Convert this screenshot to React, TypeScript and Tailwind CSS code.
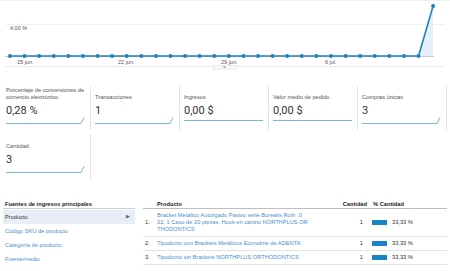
import React from "react";

// Datos del gráfico: 30 días, todo a cero salvo el último
const points = Array.from({ length: 30 }, (_, i) => ({
  x: 10 + i * 14.59,
  y: i === 29 ? 6 : 56,
}));

function Chart() {
  const line = points.map((p) => `${p.x},${p.y}`).join(" ");
  const last = points[29];
  const prev = points[28];
  return (
    <svg width="450" height="72" className="block" style={{ fontFamily: "'Liberation Sans', Arial, sans-serif" }}>
      <line x1="0" y1="0.5" x2="450" y2="0.5" stroke="#f0f0f0" />
      <line x1="5" y1="24.5" x2="445" y2="24.5" stroke="#f0f0f0" />
      <text x="10" y="30" fontSize="5.5" fill="#555">4,00 %</text>
      <polygon points={`${prev.x},${prev.y} ${last.x},${last.y} ${last.x},56`} fill="#e3f0f9" />
      <line x1="5" y1="56.5" x2="434" y2="56.5" stroke="#c8c8c8" />
      <polyline points={line} fill="none" stroke="#1f82c0" strokeWidth="1.6" strokeLinejoin="round" />
      {points.map((p, i) => (
        <circle key={i} cx={p.x} cy={p.y} r="2" fill="#1f82c0" />
      ))}
      <text x="17" y="64" fontSize="5.5" fill="#555">15 jun.</text>
      <text x="118" y="64" fontSize="5.5" fill="#555">22 jun.</text>
      <text x="221" y="64" fontSize="5.5" fill="#555">29 jun.</text>
      <text x="325" y="64" fontSize="5.5" fill="#555">6 jul.</text>
      <line x1="5" y1="66.5" x2="444" y2="66.5" stroke="#e6eef3" />
      <rect x="213.5" y="65.5" width="23" height="3.5" fill="#fafafa" stroke="#dcdcdc" strokeWidth="0.6" />
      <path d="M223 66.5 L226 66.5 L224.5 68 Z" fill="#777" />
    </svg>
  );
}

function Sparkline({ flat }: { flat?: boolean }) {
  return (
    <svg width="80" height="9" className="block">
      {flat ? (
        <line x1="0" y1="3.5" x2="79" y2="3.5" stroke="#6aafd3" strokeWidth="0.9" />
      ) : (
        <polyline points="0,6.5 75,6.5 78,0.5" fill="none" stroke="#6aafd3" strokeWidth="0.9" />
      )}
    </svg>
  );
}

interface Metric {
  title: string;
  value: string;
  flat?: boolean;
}

const metrics: Metric[] = [
  { title: "Porcentaje de conversiones de comercio electrónico", value: "0,28 %" },
  { title: "Transacciones", value: "1" },
  { title: "Ingresos", value: "0,00 $", flat: true },
  { title: "Valor medio de pedido", value: "0,00 $", flat: true },
  { title: "Compras únicas", value: "3" },
  { title: "Cantidad", value: "3" },
];

function MetricCard({ title, value, flat }: Metric) {
  return (
    <div className="w-[89px] pl-[4px] pr-[4px] border-r border-[#e4e4e4] pb-[4px]">
      <div className="h-[15px] flex items-end text-[5.7px] leading-[7px] text-[#555]">{title}</div>
      <div className="mt-[3px] text-[11px] leading-[13px] text-[#333] font-['Roboto',sans-serif]">{value}</div>
      <Sparkline flat={flat} />
    </div>
  );
}

const navItems = ["Código SKU de producto", "Categoría de producto", "Fuente/medio"];

const rows = [
  {
    n: "1.",
    lines: [
      "Bracket Metálico Autoligado Pasivo serie Borealis Roth .0",
      "22, 1 Caso de 20 piezas, Hook en canino NORTHPLUS OR",
      "THODONTICS",
    ],
  },
  { n: "2.", lines: ["Tipodonto con Brackets Metálicos Econoline de ADENTA"] },
  { n: "3.", lines: ["Tipodonto sin Brackets NORTHPLUS ORTHODONTICS"] },
];

export default function App() {
  return (
    <div className="w-[450px] h-[271px] overflow-hidden bg-white text-[#333] font-['Liberation_Sans',Arial,sans-serif]">
      <Chart />

      <div className="mt-[14px] pl-[2px] flex flex-wrap gap-y-[5px] w-[450px]">
        {metrics.map((m, i) => (
          <MetricCard key={i} {...m} />
        ))}
      </div>

      <div className="mt-[21px] flex text-[5.7px]">
        {/* Fuentes de ingresos */}
        <div className="ml-[3px] w-[132px]">
          <div className="h-[9px] leading-[9px] pl-[2px] font-bold text-[#222] border-b border-[#cfcfcf]">
            Fuentes de ingresos principales
          </div>
          <div className="mt-[1px] h-[14px] flex items-center justify-between pl-[2px] pr-[5px] bg-[#e8eef7] text-[#333]">
            <span>Producto</span>
            <span className="text-[5px] text-[#666]">▶</span>
          </div>
          {navItems.map((t) => (
            <div key={t} className="h-[14px] flex items-center pl-[2px] text-[#4a90d2]">
              {t}
            </div>
          ))}
        </div>

        {/* Tabla de productos */}
        <div className="ml-[8px] w-[304px]">
          <div className="h-[9px] flex items-center font-bold text-[#222] border-b border-[#bdbdbd]">
            <div className="w-[14px]" />
            <div className="w-[185px]">Producto</div>
            <div className="w-[25px] text-right">Cantidad</div>
            <div className="pl-[6px]">% Cantidad</div>
          </div>
          {rows.map((r) => (
            <div
              key={r.n}
              className={`flex items-center border-b border-[#e2e2e2] ${r.lines.length > 1 ? "h-[28px]" : "h-[14px]"}`}
            >
              <div className="w-[14px] pl-[2px] text-[#333]">{r.n}</div>
              <div className="w-[185px] leading-[7px] text-[#4a90d2] whitespace-nowrap">
                {r.lines.map((l, i) => (
                  <div key={i}>{l}</div>
                ))}
              </div>
              <div className="w-[21px] text-right text-[#333]">1</div>
              <div className="pl-[9px] flex items-center gap-[5px] text-[#333]">
                <div className="w-[15px] h-[5px] bg-[#1a85c5]" />
                <span>33,33 %</span>
              </div>
            </div>
          ))}
        </div>
      </div>
    </div>
  );
}
